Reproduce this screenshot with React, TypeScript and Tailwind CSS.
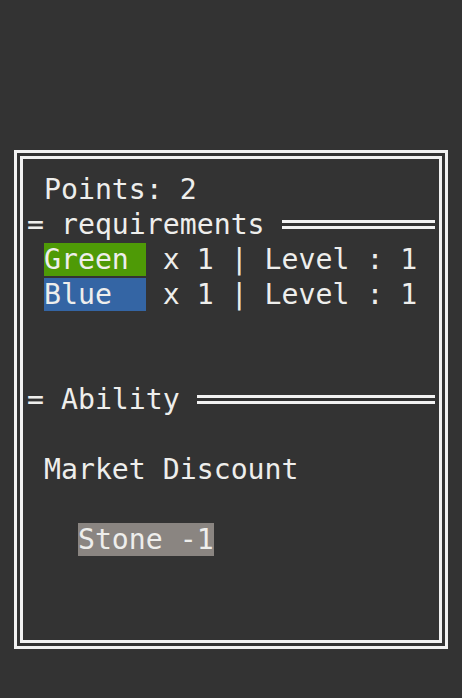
export default function App() {
  const row = "h-[35px] leading-[35px] whitespace-pre";
  return (
    <div className="w-[462px] h-[698px] bg-[#333333] pt-[150px] pl-[14px] text-[#eeeeec] text-[28.2px] font-['DejaVu_Sans_Mono',monospace]">
      {/* outer frame */}
      <div className="w-[434px] h-[499px] border-[3px] border-[#f2f2f2] p-[3px]">
        <div className="h-full border-[3px] border-[#f2f2f2] pl-[4px] pt-[13px]">
          <div className={row}> Points: 2</div>

          <div className="flex items-center h-[35px]">
            <span className="leading-[35px] whitespace-pre">= requirements </span>
            <div className="flex-1 h-[9px] border-y-[3px] border-[#f2f2f2] mr-[4px]" />
          </div>

          <div className={row}>
            {" "}
            <span className="bg-[#4e9a06]">Green </span> x 1 | Level : 1
          </div>
          <div className={row}>
            {" "}
            <span className="bg-[#3465a4]">Blue  </span> x 1 | Level : 1
          </div>

          <div className="h-[70px]" />

          <div className="flex items-center h-[35px]">
            <span className="leading-[35px] whitespace-pre">= Ability </span>
            <div className="flex-1 h-[9px] border-y-[3px] border-[#f2f2f2] mr-[4px]" />
          </div>

          <div className="h-[35px]" />
          <div className={row}> Market Discount</div>
          <div className="h-[35px]" />
          <div className={row}>
            {"   "}
            <span className="bg-[#8a8581]">Stone -1</span>
          </div>
        </div>
      </div>
    </div>
  );
}
